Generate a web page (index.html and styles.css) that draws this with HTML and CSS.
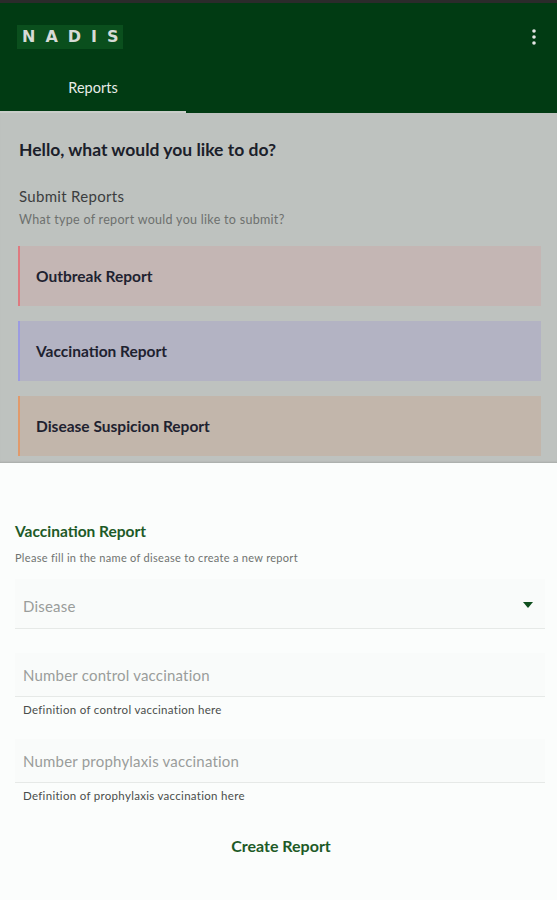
FILE: index.html
```html
<!DOCTYPE html>
<html>
<head>
<meta charset="utf-8">
<link rel="stylesheet" href="styles.css">
</head>
<body>
<div class="screen">
  <div class="status"></div>
  <header class="appbar">
    <div class="toolbar">
      <span class="logo">NADI<span class="last">S</span></span>
      <svg class="kebab" width="4" height="16" viewBox="0 0 4 16"><circle cx="2" cy="2" r="1.8" fill="#e6e6e6"/><circle cx="2" cy="8" r="1.8" fill="#e6e6e6"/><circle cx="2" cy="14" r="1.8" fill="#e6e6e6"/></svg>
    </div>
    <nav class="tabs">
      <div class="tab active">Reports</div>
    </nav>
  </header>
  <main class="content">
    <h1 class="hello">Hello, what would you like to do?</h1>
    <div class="section-title">Submit Reports</div>
    <div class="section-sub">What type of report would you like to submit?</div>
    <div class="cards">
      <div class="card outbreak">Outbreak Report</div>
      <div class="card vaccination">Vaccination Report</div>
      <div class="card suspicion">Disease Suspicion Report</div>
    </div>
  </main>
  <section class="sheet">
    <h2 class="sheet-title">Vaccination Report</h2>
    <p class="sheet-sub">Please fill in the name of disease to create a new report</p>
    <div class="field select">
      <span class="placeholder">Disease</span>
      <svg class="arrow" width="10" height="6" viewBox="0 0 10 6"><path d="M0 0 L10 0 L5 6 Z" fill="#0f4f1e"/></svg>
    </div>
    <div class="field input"><span class="placeholder">Number control vaccination</span></div>
    <div class="helper">Definition of control vaccination here</div>
    <div class="field input"><span class="placeholder">Number prophylaxis vaccination</span></div>
    <div class="helper">Definition of prophylaxis vaccination here</div>
    <div class="actions"><button class="create">Create Report</button></div>
  </section>
</div>
</body>
</html>
```

FILE: styles.css
```css
* { box-sizing: border-box; }
html, body { margin: 0; padding: 0; }
body {
  font-family: Lato, "Open Sans", sans-serif;
  background: #fbfdfc;
  width: 557px;
  height: 900px;
  overflow: hidden;
}
.screen { display: flex; flex-direction: column; height: 900px; }
.status { height: 3px; background: #2b2b2b; }
.appbar { background: #013b13; display: flex; flex-direction: column; }
.toolbar {
  height: 62px;
  display: flex;
  align-items: center;
  justify-content: space-between;
  padding: 0 21px 0 17px;
}
.logo {
  background: #0a4f1d;
  color: #d7dbd7;
  font-family: "DejaVu Sans", sans-serif;
  font-weight: bold;
  font-size: 16px;
  letter-spacing: 10px;
  padding: 2px 4px 2px 5px;
  line-height: 20px;
  margin-top: 6px;
}
.logo .last { letter-spacing: 0; }
.kebab { margin-top: 6px; }
.tabs { height: 48px; display: flex; }
.tab {
  width: 186px;
  display: flex;
  align-items: center;
  justify-content: center;
  color: #e8ece8;
  font-size: 14.5px;
  padding-bottom: 2px;
  border-bottom: 2px solid transparent;
}
.tab.active { border-bottom-color: #c9cdc9; }
.content {
  background: #bec2bf;
  height: 350px;
  padding: 27px 16px 0 18px;
  box-shadow: inset 0 -2px 2px -1px rgba(0,0,0,0.12);
}
.hello {
  margin: 0 0 0 1px;
  font-size: 17.5px;
  font-weight: bold;
  color: #1b202a;
  line-height: 20px;
}
.section-title {
  margin: 27px 0 0 1px;
  font-size: 15px;
  letter-spacing: 0.3px;
  color: #3b3d3e;
  line-height: 18px;
}
.section-sub {
  margin: 7px 0 0 1px;
  font-size: 12.5px;
  letter-spacing: 0.3px;
  color: #6d706e;
  line-height: 16px;
}
.cards { display: flex; flex-direction: column; gap: 15px; margin-top: 18px; }
.card {
  height: 60px;
  display: flex;
  align-items: center;
  padding-left: 16px;
  font-size: 15.5px;
  font-weight: bold;
  color: #1e2230;
  border-left: 2px solid;
}
.card.outbreak { background: #c4b6b4; border-left-color: #de7a80; }
.card.vaccination { background: #b3b3c3; border-left-color: #9c9ce0; }
.card.suspicion { background: #c2b6ab; border-left-color: #e09a6c; }
.sheet {
  flex: 1;
  background: #fbfdfc;
  padding: 59px 12px 0 15px;
}
.sheet-title {
  margin: 0;
  font-size: 15.5px;
  font-weight: bold;
  color: #1d5a27;
  line-height: 18px;
}
.sheet-sub {
  margin: 11px 0 0 0;
  font-size: 11px;
  letter-spacing: 0.3px;
  color: #6f7370;
  line-height: 13px;
}
.field {
  display: flex;
  align-items: center;
  justify-content: space-between;
  border-bottom: 1px solid #e6e9e7;
  background: #f9fbfa;
  padding: 0 8px 0 8px;
}
.select { height: 50px; margin-top: 15px; padding-top: 4px; }
.input { height: 44px; }
.select + .input { margin-top: 24px; }
.helper + .input { margin-top: 23px; }
.placeholder { font-size: 15px; letter-spacing: 0.2px; color: #9a9d9b; }
.arrow { margin-right: 4px; margin-top: -2px; }
.helper {
  font-size: 11.5px;
  letter-spacing: 0.3px;
  color: #4a4d4b;
  padding: 6px 8px 0 8px;
  line-height: 13px;
}
.actions { display: flex; justify-content: center; margin-top: 34px; padding-left: 2px; }
.create {
  background: none;
  border: none;
  font-family: Lato, "Open Sans", sans-serif;
  font-size: 16px;
  font-weight: bold;
  color: #1d5a27;
  padding: 0;
}
```
